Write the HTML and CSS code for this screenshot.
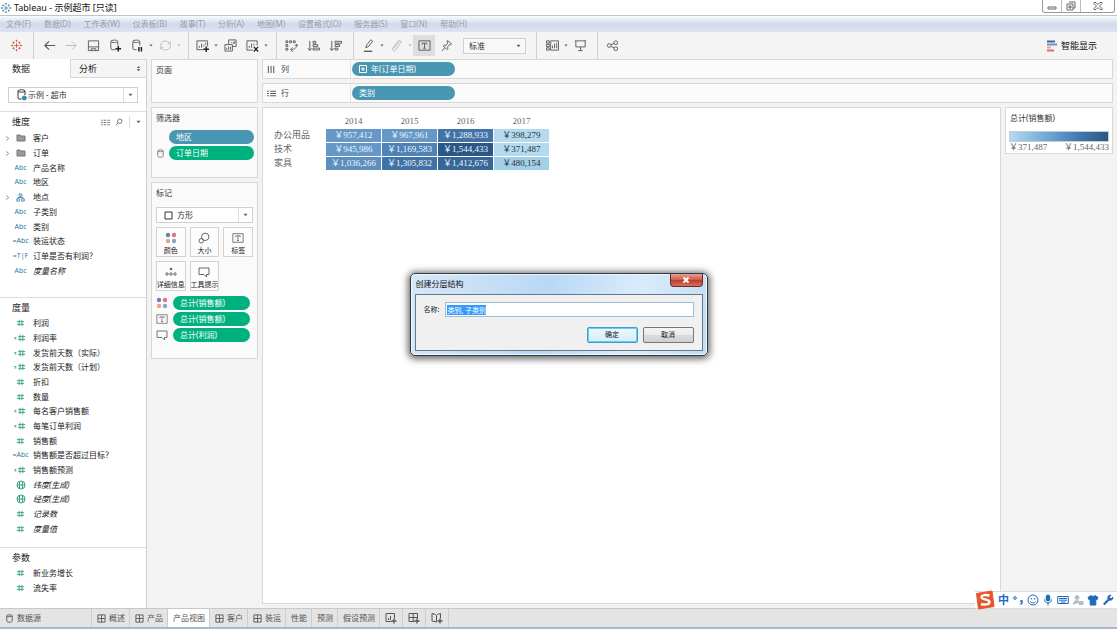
FILE: index.html
```
<!DOCTYPE html>
<html>
<head>
<meta charset="utf-8">
<title>Tableau - 示例超市 [只读]</title>
<link rel="stylesheet" href="styles.css">
<script src="app.js" defer></script>
</head>
<body>
<svg class="defs" aria-hidden="true">
  <symbol id="logo" viewBox="0 0 14 14"><path d="M7 4.5v5M4.5 7h5M7 .8v2.4M6 2h2M7 10.800v2.400M6 12h2M1 7h2.400M2.200 6v2M10.600 7H13M11.800 6v2M3.800 2.800v2.400M2.600 4H5M10.200 2.800v2.400M9 4h2.400M3.800 8.800v2.400M2.600 10H5M10.200 8.800v2.400M9 10h2.400" stroke-width="1"/></symbol>
  <symbol id="back" viewBox="0 0 14 14"><path d="M13 7H2M6.500 2.500 2 7l4.500 4.500" stroke-width="1.300"/></symbol>
  <symbol id="fwd" viewBox="0 0 14 14"><path d="M1 7h11M7.500 2.500 12 7l-4.500 4.500"/></symbol>
  <symbol id="save" viewBox="0 0 14 14"><path d="M1.500 2h11v10.500h-11zM1.500 8.500h11M4.500 12.500v-2h5v2"/></symbol>
  <symbol id="dbadd" viewBox="0 0 14 14"><path d="M7 11.500H3.500C2.500 11.500 2 11 2 10V3M9.500 3v4M2 2.500C2 .8 9.500.8 9.500 2.500S2 4.200 2 2.500"/><path d="M10 7.500v6M7 10.500h6" stroke="#222" stroke-width="1.600"/></symbol>
  <symbol id="dbpause" viewBox="0 0 14 14"><path d="M6 11.500H3.500C2.500 11.500 2 11 2 10V3M9.500 3v4M2 2.500C2 .8 9.500.8 9.500 2.500S2 4.200 2 2.500"/><path d="M8.500 8.500v5M11.200 8.500v5" stroke="#222" stroke-width="1.600"/></symbol>
  <symbol id="refresh" viewBox="0 0 14 14"><path d="M1.500 7.500C1.500 1.500 9 .5 12 5M12.500 6.500c0 6-7.500 7-10.500 2.500M9.500 5.200h3V2.500M4.500 8.800h-3v2.700"/></symbol>
  <symbol id="sheetadd" viewBox="0 0 14 14"><path d="M8 11.500H1V2h11.500v6M3.500 9.500v-2M6 9.500V5M8.500 8V6M10.500 6V4"/><path d="M11 8v6M8 11h6" stroke="#222" stroke-width="1.600"/></symbol>
  <symbol id="dup" viewBox="0 0 14 14"><path d="M5 6V1h8v7H9M1 6h8v7H1zM3 11.500v-2M5 11.500V8M7 11.500v-3M8 4.500v-1M10 5V3M11.500 5V2.500"/></symbol>
  <symbol id="clear" viewBox="0 0 14 14"><path d="M7.500 12H1V2h11v5M3.500 9.500v-2M6 9.500V5M8.500 7V5"/><path d="m8.500 8.500 4.500 5m0-5-4.500 5" stroke="#222" stroke-width="1.500"/></symbol>
  <symbol id="swap" viewBox="0 0 14 14"><path d="M1 2h2v2H1zM5 2h2v2H5zM9 2h2v2H9zM1 6h2v2H1zM1 10h2v2H1zM12.500 6c0 4-2 5-6 5.500M8.500 9 6 11.500 8.500 14M10.500 7.500l2-2 1.500 2"/></symbol>
  <symbol id="sortasc" viewBox="0 0 14 14"><path d="M3 2v10M1 10l2 2.500L5 10M6.500 2.500h3v2h-3zM6.500 6h5v2h-5zM6.500 9.800h7v2h-7z"/></symbol>
  <symbol id="sortdesc" viewBox="0 0 14 14"><path d="M3 2v10M1 10l2 2.500L5 10M6.500 2.500h7v2h-7zM6.500 6h5v2h-5zM6.500 9.800h3v2h-3z"/></symbol>
  <symbol id="pen" viewBox="0 0 14 14"><path d="m4 9.500 1-3L9.500.8l2 1.500L7.200 8 4 9.500"/><path d="M2 13.300h9" stroke-width="1.500"/></symbol>
  <symbol id="clip" viewBox="0 0 14 14"><path d="m4 10.500 5-7c1-1.500 3 0 2 1.300L6 12c-1.500 2-4.500 0-3-2.200l5.500-7.500c1.500-2 4.500 0 3.200 2"/></symbol>
  <symbol id="textbox" viewBox="0 0 14 14"><path d="M1 2h12v10H1zM4.500 6V4.500h5V6M7 4.500v5.500M5.800 10h2.400"/></symbol>
  <symbol id="pin" viewBox="0 0 14 14"><path d="m8 1.500 4.500 4-1 .8-1.200-.3-2 2.300.2 2.200-1 1-4-4 1-.8 2 .1L8.300 4.500 7.600 3zM5.300 9.200 2 13"/></symbol>
  <symbol id="marks" viewBox="0 0 14 14"><path d="M.5 2h3v2.500h-3zM.5 5.700h3v2.500h-3zM.5 9.500h3V12h-3zM5 2h8.500v10H5zM7 10V7M9.200 10V5M11.500 10V4"/></symbol>
  <symbol id="present" viewBox="0 0 14 14"><path d="M1 2h12M2 2v6.500h10V2M7 8.500v4M4.500 12.500h5"/></symbol>
  <symbol id="share" viewBox="0 0 14 14"><circle cx="3.500" cy="7" r="2"/><circle cx="10.500" cy="4" r="2"/><circle cx="10.500" cy="10.500" r="2"/><path d="m5.300 6.200 3.400-1.400M5.300 7.900l3.500 1.700"/></symbol>
  <symbol id="caret" viewBox="0 0 6 4"><path d="M.5.5h5L3 3.500z" fill="currentColor" stroke="none"/></symbol>
  <symbol id="chev" viewBox="0 0 6 8"><path d="m1.500 1.500 3 2.500-3 2.500"/></symbol>
  <symbol id="db" viewBox="0 0 8 10"><path d="M1 2v6c0 1.500 6 1.500 6 0V2M1 2C1 .6 7 .6 7 2S1 3.400 1 2"/></symbol>
  <symbol id="dbsrc" viewBox="0 0 10 12"><path d="M4.500 10H2c-.6 0-1-.4-1-1V2M8 2v4M1 2C1 .4 8 .4 8 2S1 3.600 1 2"/><circle cx="7.300" cy="9" r="2" fill="#3b86a8" stroke="#3b86a8"/></symbol>
  <symbol id="folder" viewBox="0 0 10 8"><path d="M1 1h3l1 1h4v5H1z" fill="#9a9a9a" stroke="#777"/></symbol>
  <symbol id="hier" viewBox="0 0 10 10"><path d="M3.500 1h3v2.500h-3zM.8 6.500h3V9h-3zM6.200 6.500h3V9h-3zM5 3.500V5M2.300 6.500V5h5.400v1.500"/></symbol>
  <symbol id="num" viewBox="0 0 10 8"><path d="M3.500.5v7M6.500.5v7M1 2.500h8M1 5.500h8"/></symbol>
  <symbol id="cnum" viewBox="0 0 14 8"><path d="M6.500.5v7M9.500.5v7M4.500 2.500H12M4.500 5.500H12M.5 3.500h2M.5 5h2"/></symbol>
  <symbol id="globe" viewBox="0 0 10 10"><circle cx="5" cy="5" r="4"/><path d="M3.500 1.500v7M6.500 1.500v7M1 5h8"/></symbol>
  <symbol id="grid" viewBox="0 0 10 10"><path d="M1 1h8v8H1zM5 1v8M1 5h8"/></symbol>
  <symbol id="list" viewBox="0 0 10 8"><path d="M0 1.500h2M3.500 1.500H10M0 4h2M3.500 4H10M0 6.500h2M3.500 6.500H10"/></symbol>
  <symbol id="cells" viewBox="0 0 10 8"><path d="M0 1.500h2M3 1.500h3M7 1.500h3M0 4h2M3 4h3M7 4h3M0 6.500h2M3 6.500h3M7 6.500h3"/></symbol>
  <symbol id="cols" viewBox="0 0 10 8"><path d="M1.500 0v8M4.500 0v8M7.500 0v8"/></symbol>
  <symbol id="find" viewBox="0 0 8 8"><circle cx="4.800" cy="3.200" r="2.200"/><path d="M3.200 4.800.8 7.300"/></symbol>
  <symbol id="dots" viewBox="0 0 12 12"><circle cx="3" cy="3" r="2.200" fill="#6c7fae" stroke="none"/><circle cx="9" cy="3" r="2.200" fill="#e0757f" stroke="none"/><circle cx="3" cy="9" r="2.200" fill="#e7a487" stroke="none"/><circle cx="9" cy="9" r="2.200" fill="#86a6d2" stroke="none"/></symbol>
  <symbol id="size" viewBox="0 0 12 12"><circle cx="7.200" cy="4.800" r="3.700"/><circle cx="3.300" cy="8.800" r="2.200"/></symbol>
  <symbol id="detail" viewBox="0 0 12 12"><circle cx="6" cy="3" r="1.300" fill="currentColor" stroke="none"/><circle cx="2" cy="8" r="1.200"/><circle cx="6" cy="8" r="1.200"/><circle cx="10" cy="8" r="1.200"/></symbol>
  <symbol id="tip" viewBox="0 0 12 12"><path d="M1 2h10v6.500H8.500v2.500L6 8.500H1z"/></symbol>
  <symbol id="tabadd" viewBox="0 0 12 12"><path d="M6.500 9.500H1v-8h8.500v5M3.500 8V6M5.500 8V4"/><path d="M9 6.500v5M6.500 9h5" stroke-width="1.300"/></symbol>
  <symbol id="dashadd" viewBox="0 0 12 12"><path d="M6.500 9.500H1v-8h8.500v5M5.200 1.500v8M1 5.500h8.500"/><path d="M9 6.500v5M6.500 9h5" stroke-width="1.300"/></symbol>
  <symbol id="storyadd" viewBox="0 0 12 12"><path d="M6 10 1 9V1.500l3.500 1 1 1 1-1 3-1v5M5.500 3.500v6"/><path d="M9 6.500v5M6.500 9h5" stroke-width="1.300"/></symbol>
</svg>

<div class="app">
  <header class="titlebar">
    <svg class="i12 blue"><use href="#logo"/></svg>
    <span class="title">Tableau - 示例超市 [只读]</span>
    <div class="winbtns">
      <button aria-label="最小化"><svg class="i10" viewBox="0 0 10 10"><path d="M1 6h8v2H1z"/></svg></button>
      <button aria-label="还原"><svg class="i10" viewBox="0 0 10 10"><path d="M3 1h6v6H7M1 3h6v6H1zM3 5h2v2H3z"/></svg></button>
      <button class="wide" aria-label="关闭"><svg class="i10" viewBox="0 0 10 10"><path d="m1 1.500 2 0 2 2 2-2h2v1L6.500 5 9 7.500v1H7l-2-2-2 2H1v-1L3.500 5 1 2.500z"/></svg></button>
    </div>
  </header>
  <nav class="menubar">
    <a href="#">文件(F)</a><a href="#">数据(D)</a><a href="#">工作表(W)</a><a href="#">仪表板(B)</a><a href="#">故事(T)</a><a href="#">分析(A)</a><a href="#">地图(M)</a><a href="#">设置格式(O)</a><a href="#">服务器(S)</a><a href="#">窗口(N)</a><a href="#">帮助(H)</a>
  </nav>
  <div class="toolbar">
    <div class="grp g1"><button aria-label="开始"><svg class="i14 red"><use href="#logo"/></svg></button></div>
    <div class="grp g2">
      <button aria-label="后退"><svg class="i14"><use href="#back"/></svg></button>
      <button class="off" aria-label="前进"><svg class="i14"><use href="#fwd"/></svg></button>
      <button aria-label="保存"><svg class="i14"><use href="#save"/></svg></button>
      <button aria-label="新建数据源"><svg class="i14"><use href="#dbadd"/></svg></button>
      <button aria-label="暂停更新"><svg class="i14"><use href="#dbpause"/></svg></button>
      <svg class="dd"><use href="#caret"/></svg>
      <button class="off" aria-label="刷新"><svg class="i14"><use href="#refresh"/></svg></button>
      <svg class="dd off"><use href="#caret"/></svg>
    </div>
    <div class="grp g3">
      <button aria-label="新建工作表"><svg class="i14"><use href="#sheetadd"/></svg></button>
      <svg class="dd"><use href="#caret"/></svg>
      <button aria-label="复制"><svg class="i14"><use href="#dup"/></svg></button>
      <button aria-label="清除"><svg class="i14"><use href="#clear"/></svg></button>
      <svg class="dd"><use href="#caret"/></svg>
    </div>
    <div class="grp g4">
      <button aria-label="交换"><svg class="i14"><use href="#swap"/></svg></button>
      <button aria-label="升序"><svg class="i14"><use href="#sortasc"/></svg></button>
      <button aria-label="降序"><svg class="i14"><use href="#sortdesc"/></svg></button>
    </div>
    <div class="grp g5">
      <button aria-label="突出显示"><svg class="i14"><use href="#pen"/></svg></button>
      <svg class="dd"><use href="#caret"/></svg>
      <button class="off" aria-label="组"><svg class="i14"><use href="#clip"/></svg></button>
      <svg class="dd off"><use href="#caret"/></svg>
      <button class="on" aria-label="标签"><svg class="i14"><use href="#textbox"/></svg></button>
      <button aria-label="固定"><svg class="i14"><use href="#pin"/></svg></button>
      <div class="combo fit"><select aria-label="视图大小"><option>标准</option></select><svg class="dd"><use href="#caret"/></svg></div>
    </div>
    <div class="grp g6">
      <button aria-label="卡"><svg class="i14"><use href="#marks"/></svg></button>
      <svg class="dd"><use href="#caret"/></svg>
      <button aria-label="演示"><svg class="i14"><use href="#present"/></svg></button>
    </div>
    <div class="grp g7"><button aria-label="共享"><svg class="i14"><use href="#share"/></svg></button></div>
    <button class="showme"><svg class="i12" viewBox="0 0 12 12"><path d="M1 1.500h8" stroke="#4f5f9c" stroke-width="2"/><path d="M1 4.500h10" stroke="#6c90c8" stroke-width="2"/><path d="M1 7.500h4" stroke="#e8a49a" stroke-width="2"/><path d="M1 10.500h7" stroke="#df6b6b" stroke-width="2"/></svg>智能显示</button>
  </div>

  <main class="work">
    <aside class="side">
      <div class="sidetabs"><button class="cur">数据</button><button>分析<svg class="updown" viewBox="0 0 5 8"><path d="M2.500 1 4.500 3.500h-4zM2.500 7 .5 4.500h4z" fill="#666" stroke="none"/></svg></button></div>
      <div class="combo source"><svg class="i12"><use href="#dbsrc"/></svg><select aria-label="数据源"><option>示例 - 超市</option></select><i></i><svg class="dd"><use href="#caret"/></svg></div>
      <section class="pane dims">
        <div class="head"><h2>维度</h2><svg class="i9"><use href="#cells"/></svg><svg class="i8"><use href="#find"/></svg><i></i><svg class="dd"><use href="#caret"/></svg></div>
        <ul>
          <li><svg class="chev"><use href="#chev"/></svg><svg class="i10"><use href="#folder"/></svg><span>客户</span></li>
          <li><svg class="chev"><use href="#chev"/></svg><svg class="i10"><use href="#folder"/></svg><span>订单</span></li>
          <li><b>Abc</b><span>产品名称</span></li>
          <li><b>Abc</b><span>地区</span></li>
          <li><svg class="chev"><use href="#chev"/></svg><svg class="i9 blue"><use href="#hier"/></svg><span>地点</span></li>
          <li><b>Abc</b><span>子类别</span></li>
          <li><b>Abc</b><span>类别</span></li>
          <li><b>=Abc</b><span>装运状态</span></li>
          <li><b>=T|F</b><span>订单是否有利润？</span></li>
          <li><b>Abc</b><span><em>度量名称</em></span></li>
        </ul>
      </section>
      <section class="pane meas">
        <div class="head"><h2>度量</h2></div>
        <ul>
          <li><svg class="num"><use href="#num"/></svg><span>利润</span></li>
          <li><svg class="cnum"><use href="#cnum"/></svg><span>利润率</span></li>
          <li><svg class="cnum"><use href="#cnum"/></svg><span>发货前天数（实际）</span></li>
          <li><svg class="cnum"><use href="#cnum"/></svg><span>发货前天数（计划）</span></li>
          <li><svg class="num"><use href="#num"/></svg><span>折扣</span></li>
          <li><svg class="num"><use href="#num"/></svg><span>数量</span></li>
          <li><svg class="cnum"><use href="#cnum"/></svg><span>每名客户销售额</span></li>
          <li><svg class="cnum"><use href="#cnum"/></svg><span>每笔订单利润</span></li>
          <li><svg class="num"><use href="#num"/></svg><span>销售额</span></li>
          <li><b>=Abc</b><span>销售额是否超过目标？</span></li>
          <li><svg class="cnum"><use href="#cnum"/></svg><span>销售额预测</span></li>
          <li><svg class="i10 green"><use href="#globe"/></svg><span><em>纬度(生成)</em></span></li>
          <li><svg class="i10 green"><use href="#globe"/></svg><span><em>经度(生成)</em></span></li>
          <li><svg class="num"><use href="#num"/></svg><span><em>记录数</em></span></li>
          <li><svg class="num"><use href="#num"/></svg><span><em>度量值</em></span></li>
        </ul>
      </section>
      <section class="pane params">
        <div class="head"><h2>参数</h2></div>
        <ul>
          <li><svg class="num"><use href="#num"/></svg><span>新业务增长</span></li>
          <li><svg class="num"><use href="#num"/></svg><span>流失率</span></li>
        </ul>
      </section>
    </aside>

    <div class="cards">
      <section class="card pages"><h3>页面</h3></section>
      <section class="card filters"><h3>筛选器</h3>
        <div class="prow"><span></span><button class="pill blueP">地区</button></div>
        <div class="prow"><svg class="i9"><use href="#db"/></svg><button class="pill greenP">订单日期</button></div>
      </section>
      <section class="card marks"><h3>标记</h3>
        <div class="combo mtype"><svg class="i9" viewBox="0 0 9 9"><path d="M1 1h7v7H1z"/></svg><select aria-label="标记类型"><option>方形</option></select><i></i><svg class="dd"><use href="#caret"/></svg></div>
        <div class="mbtns">
          <button><svg class="i12"><use href="#dots"/></svg>颜色</button>
          <button><svg class="i12"><use href="#size"/></svg>大小</button>
          <button><svg class="i12"><use href="#textbox"/></svg>标签</button>
          <button><svg class="i12"><use href="#detail"/></svg>详细信息</button>
          <button><svg class="i12"><use href="#tip"/></svg>工具提示</button>
        </div>
        <div class="prow m"><svg class="i12"><use href="#dots"/></svg><button class="pill greenP">总计(销售额)</button></div>
        <div class="prow m"><svg class="i12"><use href="#textbox"/></svg><button class="pill greenP">总计(销售额)</button></div>
        <div class="prow m"><svg class="i12"><use href="#tip"/></svg><button class="pill greenP">总计(利润)</button></div>
      </section>
    </div>

    <div class="stage">
      <div class="shelf"><div class="sl"><svg class="i9"><use href="#cols"/></svg>列</div><button class="pill blueP"><svg class="i8" viewBox="0 0 8 8"><path d="M.5.5h7v7h-7zM4 2v4M2 4h4"/></svg>年(订单日期)</button></div>
      <div class="shelf"><div class="sl"><svg class="i9"><use href="#list"/></svg>行</div><button class="pill blueP">类别</button></div>
      <div class="lower">
        <section class="view">
          <table>
            <thead><tr><th></th><th>2014</th><th>2015</th><th>2016</th><th>2017</th></tr></thead>
            <tbody>
              <tr><th>办公用品</th><td class="c2">￥957,412</td><td class="c2">￥967,961</td><td class="c4">￥1,288,933</td><td class="c0">￥398,279</td></tr>
              <tr><th>技术</th><td class="c2">￥945,986</td><td class="c3">￥1,169,583</td><td class="c6">￥1,544,433</td><td class="c0">￥371,487</td></tr>
              <tr><th>家具</th><td class="c2b">￥1,036,266</td><td class="c4">￥1,305,832</td><td class="c5">￥1,412,676</td><td class="c1">￥480,154</td></tr>
            </tbody>
          </table>
        </section>
        <section class="legend"><h3>总计(销售额)</h3><div class="ramp"></div><div class="ends"><span>￥371,487</span><span>￥1,544,433</span></div></section>
      </div>
    </div>
  </main>

  <footer class="sheets">
    <button class="src"><svg class="i9"><use href="#db"/></svg>数据源</button>
    <button><svg class="i9"><use href="#grid"/></svg>概述</button>
    <button><svg class="i9"><use href="#grid"/></svg>产品</button>
    <button class="cur">产品视图</button>
    <button><svg class="i9"><use href="#grid"/></svg>客户</button>
    <button><svg class="i9"><use href="#grid"/></svg>装运</button>
    <button>性能</button>
    <button>预测</button>
    <button>假设预测</button>
    <button class="add" aria-label="新建工作表"><svg class="i12"><use href="#tabadd"/></svg></button>
    <button class="add" aria-label="新建仪表板"><svg class="i12"><use href="#dashadd"/></svg></button>
    <button class="add" aria-label="新建故事"><svg class="i12"><use href="#storyadd"/></svg></button>
  </footer>
</div>

<div class="overlay">
  <form class="dialog" role="dialog" aria-label="创建分层结构">
    <div class="dtitle"><span>创建分层结构</span><button type="button" class="x" aria-label="关闭"><svg class="i8" viewBox="0 0 8 8"><path d="m1.500 1.500 5 5m0-5-5 5" stroke="#fff" stroke-width="1.800"/></svg></button></div>
    <div class="dbody">
      <div class="field"><label for="hname">名称:</label><input id="hname" type="text" value="类别, 子类别"></div>
      <div class="acts"><button type="button" class="ok">确定</button><button type="button">取消</button></div>
    </div>
  </form>
</div>

<div class="ime">
  <svg class="sogou" viewBox="0 0 20 20"><path d="M1.500 3.500 17 1l2 15.500L3.500 19z" fill="#e8532a" stroke="#e8532a"/><path d="M14.500 5.500c-3-.8-8-.7-8 1.800 0 2.700 8 1.500 8 4.700 0 2.800-5.500 3-8.500 2" stroke="#fff" stroke-width="2.400"/></svg>
  <span>中</span>
  <svg viewBox="0 0 12 12"><circle cx="3" cy="4" r="1.300"/><path d="M8 7h2v2L8.500 10.500" stroke-width="1.500"/></svg>
  <svg viewBox="0 0 12 12"><circle cx="6" cy="6" r="5"/><path d="M4.200 4v1.500M7.800 4v1.500M3.500 7.500c1 2 4 2 5 0"/></svg>
  <svg viewBox="0 0 12 12"><rect x="4.200" y="1" width="3.600" height="6" rx="1.800" fill="currentColor"/><path d="M2.500 5.500c0 4.500 7 4.500 7 0M6 9v2.500"/></svg>
  <svg viewBox="0 0 12 12"><path d="M.7 2.500h10.600v7H.7zM2 4.500h8M2 6.200h8M3.500 8h5"/></svg>
  <svg class="dim" viewBox="0 0 12 12"><circle cx="5" cy="3.500" r="2" fill="currentColor"/><path d="M1.500 10.500c0-5 5-5 6-2M7 7.500h4v3H7z" fill="currentColor"/></svg>
  <svg viewBox="0 0 12 12"><path d="m4 1.500-3 2 1 2.300 1.200-.5V11h5.600V5.300l1.200.5 1-2.300-3-2c-.8 1.300-3.200 1.300-4 0z" fill="currentColor"/></svg>
  <svg viewBox="0 0 12 12"><path d="m1.800 10.500 5-5" stroke-width="2.200"/><path d="M10.800 3.200 9 5 7.200 3.200 9 1.300C6 .5 5 4 6.500 5.500s5 .5 4.300-2.300z" fill="currentColor"/></svg>
</div>
</body>
</html>
```
FILE: styles.css
```
* { box-sizing: border-box; }
html, body { height: 100%; }
body {
  margin: 0;
  background: #f3f3f3;
  color: #222;
  font: 8px/12px "Noto Sans", "Noto Sans CJK SC", sans-serif;
  text-spacing-trim: space-all;
  overflow: hidden;
}
svg { fill: none; stroke: currentColor; stroke-width: 1; display: block; flex: none; }
.defs { position: absolute; width: 0; height: 0; }
button, select, input { font: inherit; color: inherit; border: 0; padding: 0; margin: 0; background: none; }
select { appearance: none; outline: 0; }
a { color: inherit; text-decoration: none; }
h2, h3, ul { margin: 0; padding: 0; font-weight: 400; }
h3 { font-size: 8px; }
ul { list-style: none; }
.i8 { width: 8px; height: 8px; }
.i9 { width: 9px; height: 9px; }
.i10 { width: 10px; height: 10px; }
.i12 { width: 12px; height: 12px; }
.i14 { width: 13px; height: 13px; }
.dd { width: 5px; height: 4px; color: #666; }
.blue { color: #4588ac; }
.green { color: #35a283; }
.red { color: #d0604c; }

.app { display: flex; flex-direction: column; height: 100%; }

.titlebar {
  display: flex;
  align-items: center;
  gap: 2px;
  height: 16px;
  background: radial-gradient(ellipse at 28px 7px, #a8e3f5 0, #fff 36px);
  border-bottom: 1px solid #c4c4c4;
}
.title { flex: 1; font-size: 9px; color: #111; }
.winbtns {
  display: flex;
  align-self: flex-start;
  height: 13px;
  margin-right: 2px;
  border: 1px solid #999;
  border-top: 0;
  border-radius: 0 0 3px 3px;
  color: #666;
}
.winbtns button { width: 19px; display: grid; place-items: center; border-right: 1px solid #bbb; }
.winbtns .wide { width: 33px; border-right: 0; }

.menubar {
  display: flex;
  gap: 13px;
  height: 16px;
  padding: 2px 6px;
  background: linear-gradient(#fafbfe, #d3daec 50%, #dfe3f3);
  color: #9a9da8;
  white-space: nowrap;
}

.toolbar { display: flex; height: 27px; align-items: stretch; color: #5a5a5a; background: #f4f4f4; }
.grp { display: flex; align-items: center; border-right: 1px solid #d0d0d0; }
.grp button { width: 22px; height: 21px; display: grid; place-items: center; }
.grp > .dd { width: 4px; height: 3px; margin: 0 1px; }
.grp .off { color: #bbb; }
.grp .on { background: #dedede; }
.g1 { padding: 0 6px 0 5px; }
.g2 { padding: 0 6px 0 4px; }
.g3 { padding: 0 7px 0 2px; }
.g4 { padding: 0 7px 0 3px; }
.g5 { padding: 0 10px 0 3px; }
.g6 { padding: 0 6px 0 4px; }
.g7 { padding-left: 3px; border: 0; }
.combo { display: flex; align-items: center; border: 1px solid #cfcfcf; background: #fff; height: 16px; color: #333; }
.combo select { flex: 1; min-width: 0; align-self: stretch; }
.combo .dd { margin: 0 4px; }
.combo i { width: 1px; align-self: stretch; background: #dcdcdc; }
.fit { width: 63px; margin-left: 6px; padding-left: 5px; background: #f8f8f8; }
.showme { display: flex; align-items: center; gap: 3px; margin-left: auto; padding-right: 20px; font-size: 9px; color: #111; }

.work { flex: 1; display: flex; gap: 4px; min-height: 0; padding-right: 4px; }
.side { width: 147px; background: #fff; border-right: 1px solid #d0d0d0; }
.sidetabs { display: flex; height: 19px; font-size: 9px; }
.sidetabs button { flex: 1; display: flex; align-items: center; padding: 0 5px 0 8px; background: #f5f5f5; border: solid #d8d8d8; border-width: 1px 0 1px 1px; text-align: left; }
.sidetabs .cur { flex: none; width: 70px; padding-left: 12px; background: #fff; border-color: #fff; border-width: 1px 0; }
.updown { width: 5px; height: 7px; margin-left: auto; }
.source { margin: 9px 8px 8px; padding-left: 7px; }
.pane { border-top: 1px solid #dcdcdc; }
.head { display: flex; align-items: center; gap: 5px; height: 18px; padding: 2px 5px 0 12px; color: #777; }
.head h2 { flex: 1; font-size: 9px; color: #222; }
.head i { width: 1px; height: 12px; margin: 0 1px; background: #ddd; }
.pane ul { display: grid; grid-auto-rows: 1fr; }
.dims ul { height: 147px; margin: 1px 0 19px; }
.meas ul { height: 220px; margin-bottom: 11px; }
.params .head { height: 17px; }
.params ul { height: 30px; }
.pane li { display: grid; grid-template-columns: 9px 17px 1fr; align-items: center; padding-left: 3px; white-space: nowrap; }
.pane li > * { grid-column: 2; grid-row: 1; justify-self: center; }
.pane li > .chev { grid-column: 1; width: 5px; height: 7px; color: #777; }
.pane li > span { grid-column: 3; justify-self: start; padding-left: 4px; }
.pane b { font-size: 7px; font-weight: 400; color: #2b7da6; }
.num { width: 9px; height: 8px; color: #35a283; }
.cnum { width: 13px; height: 8px; color: #35a283; }

.cards { width: 107px; display: flex; flex-direction: column; gap: 4px; }
.card, .shelf, .legend { background: #fafafa; border: 1px solid #d8d8d8; }
.card { padding: 4px; }
.card h3 { color: #333; }
.pages { height: 44px; }
.filters { height: 71px; padding-right: 3px; }
.filters h3 { margin-bottom: 6px; }
.marks { height: 177px; }
.prow { display: grid; grid-template-columns: 9px 1fr; gap: 4px; align-items: center; margin-bottom: 2px; color: #777; }
.prow.m { grid-template-columns: 12px 1fr; gap: 5px; padding-right: 3px; justify-items: center; }
.pill { display: flex; align-items: center; gap: 4px; width: 100%; height: 14px; padding: 0 7px; border-radius: 7px; color: #fff; text-align: left; }
.blueP { background: #4996b2; }
.greenP { background: #00b180; }
.mtype { margin: 8px 0 4px; padding-left: 7px; gap: 4px; }
.mtype .dd { margin-left: 0; }
.mbtns { display: grid; grid-template-columns: repeat(3, 1fr); gap: 4px; margin-bottom: 5px; }
.mbtns button { height: 30px; display: flex; flex-direction: column; align-items: center; justify-content: space-between; padding-top: 4px; border: 1px solid #d2d2d2; background: #fcfcfc; color: #222; font-size: 7px; line-height: 10px; white-space: nowrap; overflow: hidden; }
.mbtns svg { color: #666; }

.stage { flex: 1; min-width: 0; display: flex; flex-direction: column; gap: 4px; padding-bottom: 4px; }
.shelf { display: flex; align-items: center; height: 20px; }
.sl { display: flex; align-items: center; gap: 5px; width: 88px; height: 100%; padding-left: 4px; border-right: 1px solid #e2e2e2; color: #444; }
.shelf .pill { width: 103px; margin-left: 1px; }
.lower { flex: 1; display: flex; gap: 4px; align-items: flex-start; }
.view { flex: 1; align-self: stretch; background: #fff; border: 1px solid #d8d8d8; padding: 6px 10px; }
table { border-collapse: separate; border-spacing: 1px; font: 9px/13px "Liberation Serif", "Noto Sans CJK SC", serif; color: #666; table-layout: fixed; width: 277px; }
th, td { height: 13px; padding: 0; font-weight: 400; text-align: center; white-space: nowrap; }
tr th:first-child { width: 51px; text-align: left; }
td { color: #eef4fa; }
.c0 { background: #b3daef; color: #333; }
.c1 { background: #a2cfe9; color: #333; }
.c2 { background: #6598c7; }
.c2b { background: #5c8fc0; }
.c3 { background: #5083b5; }
.c4 { background: #4273a7; }
.c5 { background: #376799; }
.c6 { background: #2a5783; }
.legend { width: 108px; padding: 4px 4px 0; background: #fff; }
.legend h3 { color: #333; }
.ramp { height: 11px; margin: 7px -1px 0; background: linear-gradient(90deg, #b3daef, #6da5d4 40%, #4379b0 70%, #2a5783); border: 1px solid #c5cdd5; }
.ends { display: flex; justify-content: space-between; margin: 0 -1px; font: 9px/11px "Liberation Serif", "Noto Sans CJK SC", serif; color: #666; }

.sheets { display: flex; height: 21px; background: #e4e4e4; border-top: 1px solid #c8c8c8; border-bottom: 2px solid #a9b8cc; color: #555; }
.sheets button { display: flex; align-items: center; gap: 3px; padding: 0 4px 0 5px; border-right: 1px solid #ccc; white-space: nowrap; }
.sheets .src { width: 92px; }
.sheets .cur { background: #fff; }
.sheets .add { padding: 0 5px; }

.overlay { position: absolute; inset: 0; display: grid; place-items: center; }
.dialog { width: 298px; padding: 0 4px 4px; border: 1px solid #2f3a45; border-radius: 5px; background: linear-gradient(100deg, #d7e8f7, #b9d8f6 45%, #d9ecfb 75%, #c3dcf3); box-shadow: 0 1px 7px 2px rgba(0, 0, 0, .6), inset 0 0 0 1px #eef7fd; }
.dtitle { display: flex; justify-content: space-between; height: 20px; padding-left: 1px; line-height: 20px; color: #111; }
.x { width: 33px; height: 13px; display: grid; place-items: center; border: 1px solid #6d2b25; border-top: 0; border-radius: 0 0 4px 4px; background: linear-gradient(#e3a096, #cf5a48 50%, #c03a28 51%, #d6705c); }
.dbody { padding: 7px 8px; border: 1px solid #64798c; background: #f0f0f0; font-size: 7px; }
.field { display: flex; align-items: center; gap: 6px; }
.field input { flex: 1; height: 15px; padding: 0 1px; border: 1px solid #9fbcd6; background: #fff; outline: 0; }
.field input::selection { background: #3399ff; color: #fff; }
.acts { display: flex; justify-content: flex-end; gap: 5px; margin-top: 10px; }
.acts button { width: 51px; height: 16px; border: 1px solid #777; border-radius: 2px; background: linear-gradient(#f4f4f4, #ebebeb 50%, #dcdcdc 51%, #d0d0d0); color: #111; }
.acts .ok { border-color: #3c9fcb; box-shadow: inset 0 0 0 1px #5fd0f5; background: linear-gradient(#eef8fc, #d5ecf6); }

.ime { position: absolute; right: 0; bottom: 20px; display: flex; align-items: center; gap: 3px; height: 18px; padding: 0 3px 0 0; border: 1px solid #cfe0ee; border-width: 1px 0; background: #fff; color: #1d6bbd; }
.ime svg { width: 12px; height: 12px; }
.ime .sogou { width: 20px; height: 20px; }
.ime span { font-size: 11px; font-weight: 700; }
.ime .dim { color: #b4bcc6; }
```
FILE: app.js
```
const nameField = document.getElementById('hname');
nameField.focus();
nameField.select();
```
